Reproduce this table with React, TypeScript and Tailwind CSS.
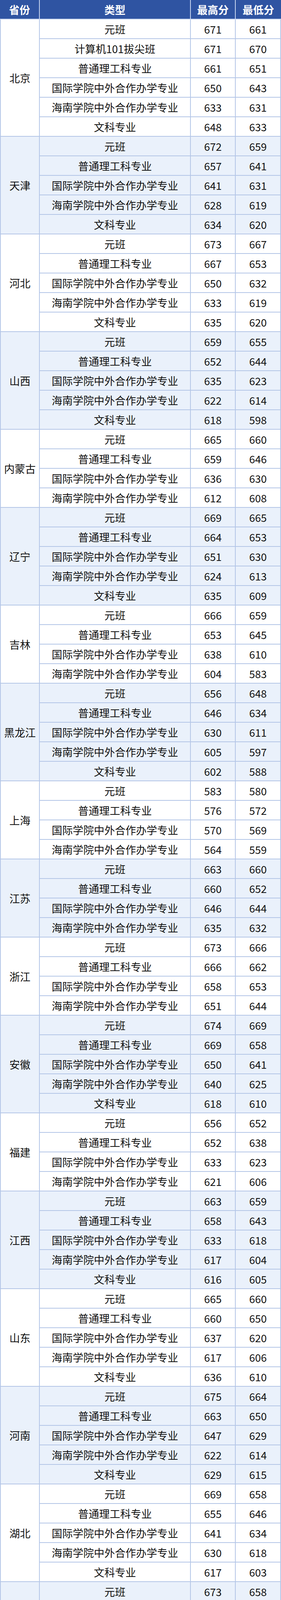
const line = 'border-[#b4c6e7]'
const numFont = { fontFamily: "'Liberation Sans Narrow', 'Noto Sans CJK SC', sans-serif" }

type Row = [string, string, string]

const groups: [string, Row[]][] = [
  ['北京', [['元班', '671', '661'], ['计算机101拔尖班', '671', '670'], ['普通理工科专业', '661', '651'], ['国际学院中外合作办学专业', '650', '643'], ['海南学院中外合作办学专业', '633', '631'], ['文科专业', '648', '633']]],
  ['天津', [['元班', '672', '659'], ['普通理工科专业', '657', '641'], ['国际学院中外合作办学专业', '641', '631'], ['海南学院中外合作办学专业', '628', '619'], ['文科专业', '634', '620']]],
  ['河北', [['元班', '673', '667'], ['普通理工科专业', '667', '653'], ['国际学院中外合作办学专业', '650', '632'], ['海南学院中外合作办学专业', '633', '619'], ['文科专业', '635', '620']]],
  ['山西', [['元班', '659', '655'], ['普通理工科专业', '652', '644'], ['国际学院中外合作办学专业', '635', '623'], ['海南学院中外合作办学专业', '622', '614'], ['文科专业', '618', '598']]],
  ['内蒙古', [['元班', '665', '660'], ['普通理工科专业', '659', '646'], ['国际学院中外合作办学专业', '636', '630'], ['海南学院中外合作办学专业', '612', '608']]],
  ['辽宁', [['元班', '669', '665'], ['普通理工科专业', '664', '653'], ['国际学院中外合作办学专业', '651', '630'], ['海南学院中外合作办学专业', '624', '613'], ['文科专业', '635', '609']]],
  ['吉林', [['元班', '666', '659'], ['普通理工科专业', '653', '645'], ['国际学院中外合作办学专业', '638', '610'], ['海南学院中外合作办学专业', '604', '583']]],
  ['黑龙江', [['元班', '656', '648'], ['普通理工科专业', '646', '634'], ['国际学院中外合作办学专业', '630', '611'], ['海南学院中外合作办学专业', '605', '597'], ['文科专业', '602', '588']]],
  ['上海', [['元班', '583', '580'], ['普通理工科专业', '576', '572'], ['国际学院中外合作办学专业', '570', '569'], ['海南学院中外合作办学专业', '564', '559']]],
  ['江苏', [['元班', '663', '660'], ['普通理工科专业', '660', '652'], ['国际学院中外合作办学专业', '646', '644'], ['海南学院中外合作办学专业', '635', '632']]],
  ['浙江', [['元班', '673', '666'], ['普通理工科专业', '666', '662'], ['国际学院中外合作办学专业', '658', '653'], ['海南学院中外合作办学专业', '651', '644']]],
  ['安徽', [['元班', '674', '669'], ['普通理工科专业', '669', '658'], ['国际学院中外合作办学专业', '650', '641'], ['海南学院中外合作办学专业', '640', '625'], ['文科专业', '618', '610']]],
  ['福建', [['元班', '656', '652'], ['普通理工科专业', '652', '638'], ['国际学院中外合作办学专业', '633', '623'], ['海南学院中外合作办学专业', '621', '606']]],
  ['江西', [['元班', '663', '659'], ['普通理工科专业', '658', '643'], ['国际学院中外合作办学专业', '633', '618'], ['海南学院中外合作办学专业', '617', '604'], ['文科专业', '616', '605']]],
  ['山东', [['元班', '665', '660'], ['普通理工科专业', '660', '650'], ['国际学院中外合作办学专业', '637', '620'], ['海南学院中外合作办学专业', '617', '606'], ['文科专业', '636', '610']]],
  ['河南', [['元班', '675', '664'], ['普通理工科专业', '663', '650'], ['国际学院中外合作办学专业', '647', '629'], ['海南学院中外合作办学专业', '622', '614'], ['文科专业', '629', '615']]],
  ['湖北', [['元班', '669', '658'], ['普通理工科专业', '655', '646'], ['国际学院中外合作办学专业', '641', '634'], ['海南学院中外合作办学专业', '630', '618'], ['文科专业', '617', '603']]],
  ['湖南', [['元班', '673', '658'], ['普通理工科专业', '657', '645'], ['国际学院中外合作办学专业', '638', '622'], ['海南学院中外合作办学专业', '614', '606'], ['文科专业', '613', '600']]],
  ['广东', [['元班', '667', '657'], ['普通理工科专业', '655', '637'], ['国际学院中外合作办学专业', '637', '625'], ['海南学院中外合作办学专业', '623', '615']]],
  ['广西', [['元班', '663', '652'], ['普通理工科专业', '650', '635'], ['国际学院中外合作办学专业', '623', '611'], ['海南学院中外合作办学专业', '604', '591']]],
  ['海南', [['元班', '792', '753'], ['普通理工科专业', '748', '730'], ['国际学院中外合作办学专业', '712', '695'], ['海南学院中外合作办学专业', '673', '649']]],
  ['重庆', [['元班', '660', '656'], ['普通理工科专业', '655', '646'], ['国际学院中外合作办学专业', '642', '621'], ['海南学院中外合作办学专业', '615', '607']]],
  ['四川', [['元班', '657', '650'], ['普通理工科专业', '650', '637'], ['国际学院中外合作办学专业', '628', '619'], ['海南学院中外合作办学专业', '618', '609'], ['文科专业', '620', '610']]],
  ['贵州', [['元班', '659', '657'], ['普通理工科专业', '655', '644'], ['国际学院中外合作办学专业', '634', '622'], ['海南学院中外合作办学专业', '623', '601']]],
  ['云南', [['元班', '652', '652'], ['普通理工科专业', '648', '640'], ['国际学院中外合作办学专业', '632', '619'], ['海南学院中外合作办学专业', '617', '607']]],
  ['西藏', []],
  ['陕西', [['元班', '664', '659'], ['普通理工科专业', '656', '644'], ['国际学院中外合作办学专业', '635', '625'], ['海南学院中外合作办学专业', '625', '609'], ['文科专业', '621', '605']]],
  ['甘肃', [['元班', '650', '647'], ['普通理工科专业', '645', '632'], ['国际学院中外合作办学专业', '622', '604'], ['海南学院中外合作办学专业', '589', '574']]],
  ['青海', [['元班', '624', '623'], ['普通理工科专业', '609', '598'], ['国际学院中外合作办学专业', '579', '569']]],
  ['宁夏', [['元班', '628', '623'], ['普通理工科专业', '622', '609'], ['国际学院中外合作办学专业', '601', '580'], ['海南学院中外合作办学专业', '549', '546']]],
  ['新疆', [['元班', '668', '658'], ['普通理工科专业', '657', '646'], ['国际学院中外合作办学专业', '642', '624'], ['海南学院中外合作办学专业', '614', '596']]],
]

function DataRow({ row }: { row: Row }) {
  return (
    <div className={`flex h-[50px] border-b-2 ${line}`}>
      <div className={`w-[387px] flex items-center justify-center border-r-2 ${line}`}>{row[0]}</div>
      <div className={`w-[115px] flex items-center justify-center border-r-2 ${line}`} style={numFont}>
        {row[1]}
      </div>
      <div className={`flex-1 flex items-center justify-center border-r-2 ${line}`} style={numFont}>
        {row[2]}
      </div>
    </div>
  )
}

function SplitCell({ han }: { han: string }) {
  return (
    <div className={`w-[115px] flex flex-col border-r-2 ${line} last:flex-1 last:w-auto`}>
      <div className={`h-[50px] flex items-end justify-center pb-[12px] border-b-2 ${line}`}>
        <span style={numFont}>{han}</span>
        <span className="text-[14px] ml-[2px]">(汉族)</span>
      </div>
      <div className="flex-1 flex items-end justify-center pb-[12px] pr-[4px]">
        <span style={numFont}>455</span>
        <span className="text-[14px] ml-[4px]">（藏族）</span>
      </div>
    </div>
  )
}

function Tibet() {
  return (
    <div className={`flex h-[100px] border-b-2 ${line}`}>
      <div className={`w-[387px] flex items-center justify-center border-r-2 ${line}`}>普通理工科专业</div>
      <SplitCell han="648" />
      <SplitCell han="635" />
    </div>
  )
}

export default function App() {
  return (
    <div
      className="w-[720px] bg-white text-[27px] text-[#111] leading-none"
      style={{ fontFamily: "'Noto Sans CJK SC', 'Noto Sans', sans-serif" }}
    >
      <div className="flex h-[50px] bg-[#2f54a2] text-white font-bold border-b-2 border-[#c9d6ef]">
        <div className="w-[102px] flex items-center justify-center border-r-2 border-[#c9d6ef]">省份</div>
        <div className="w-[387px] flex items-center justify-center border-r-2 border-[#c9d6ef]">类型</div>
        <div className="w-[115px] flex items-center justify-center border-r-2 border-[#c9d6ef]">最高分</div>
        <div className="flex-1 flex items-center justify-center">最低分</div>
      </div>
      {groups.map(([province, rows], i) => (
        <div key={province} className={`flex ${i % 2 === 1 ? 'bg-[#eaf1fb]' : 'bg-white'}`}>
          <div className={`w-[102px] flex items-center justify-center border-l-2 border-r-2 border-b-2 ${line}`}>
            {province}
          </div>
          <div className="flex-1 flex flex-col">
            {province === '西藏' ? <Tibet /> : rows.map((r, j) => <DataRow key={j} row={r} />)}
          </div>
        </div>
      ))}
    </div>
  )
}
